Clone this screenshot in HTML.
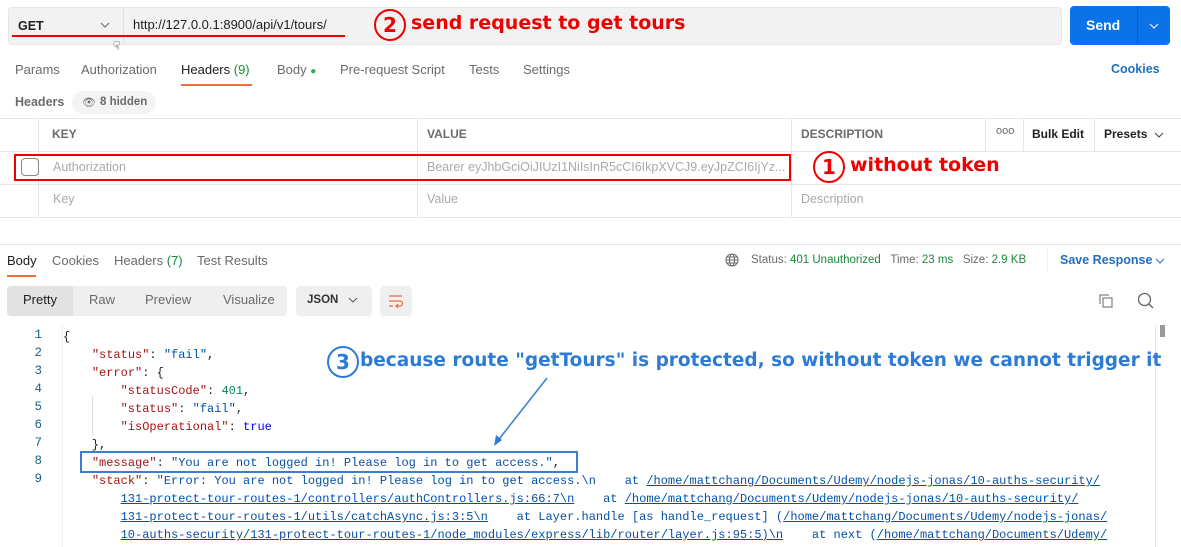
<!DOCTYPE html>
<html><head><meta charset="utf-8"><style>
*{margin:0;padding:0;box-sizing:border-box}
body{width:1181px;height:547px;overflow:hidden;background:#fff;font-family:"Liberation Sans",sans-serif;font-size:13px;color:#212121;position:relative}
.a{position:absolute;white-space:nowrap}
.g{color:#6b6b6b}
.mono{font-family:"Liberation Mono",monospace;font-size:12px}
.k{color:#a31515}.s{color:#0451a5}.n{color:#098658}.t{color:#0000ff}
.u{text-decoration:underline;color:#0451a5}
.ln{position:absolute;left:20px;width:22px;text-align:right;font-family:"Liberation Mono",monospace;font-size:12.5px;color:#1f5f8b}
.circ{position:absolute;border-radius:50%;font-weight:bold;text-align:center}
</style></head><body>
<!-- url bar -->
<div class="a" style="left:8px;top:7px;width:1054px;height:38px;background:#f2f2f2;border:1px solid #e6e6e6;border-radius:4px"></div>
<div class="a" style="left:123px;top:8px;width:1px;height:36px;background:#e0e0e0"></div>
<div class="a" style="left:18px;top:19px;font-weight:bold;font-size:12.5px">GET</div>
<svg class="a" style="left:100px;top:21px" width="10" height="8"><path d="M1 2l4 4 4-4" stroke="#666" fill="none"/></svg>
<div class="a" style="left:133px;top:17px;font-size:13px">http://127.0.0.1:8900/api/v1/tours/</div>
<div class="a" style="left:12px;top:35px;width:333px;height:2px;background:#e00"></div>
<div class="a" style="left:113px;top:39px;font-size:12px">☟</div>
<div class="circ" style="left:374px;top:9px;width:32px;height:32px;border:2px solid #e00;color:#e00;font-size:20px;line-height:28px;font-family:'DejaVu Sans',sans-serif">2</div>
<div class="a" style="left:411px;top:12px;color:#e00;font-weight:bold;font-size:19px;font-family:'DejaVu Sans',sans-serif">send request to get tours</div>
<div class="a" style="left:1070px;top:6px;width:100px;height:39px;background:#0b72e7;border-radius:4px"></div>
<div class="a" style="left:1137px;top:6px;width:1px;height:39px;background:#0a5fc2"></div>
<div class="a" style="left:1086px;top:17px;color:#fff;font-weight:bold;font-size:14px">Send</div>
<svg class="a" style="left:1149px;top:22px" width="10" height="8"><path d="M1 2l4 4 4-4" stroke="#fff" fill="none"/></svg>
<!-- tabs -->
<div class="a g" style="left:15px;top:62px">Params</div>
<div class="a g" style="left:81px;top:62px">Authorization</div>
<div class="a" style="left:181px;top:62px">Headers <span style="color:#1a8a3b">(9)</span></div>
<div class="a" style="left:181px;top:84px;width:71px;height:2px;background:#f26b3a"></div>
<div class="a g" style="left:277px;top:62px">Body <span style="color:#26b34a;font-size:10px">●</span></div>
<div class="a g" style="left:340px;top:62px">Pre-request Script</div>
<div class="a g" style="left:469px;top:62px">Tests</div>
<div class="a g" style="left:523px;top:62px">Settings</div>
<div class="a" style="left:1111px;top:62px;color:#1f6fc5;font-weight:bold;font-size:12.5px">Cookies</div>
<div class="a g" style="left:15px;top:95px;font-weight:bold;font-size:12.5px">Headers</div>
<div class="a" style="left:72px;top:91px;width:84px;height:23px;background:#f4f4f4;border-radius:12px"></div>
<div class="a g" style="left:82px;top:96px;font-size:11px">👁</div>
<div class="a g" style="left:100px;top:96px;font-size:11.5px;font-weight:bold">8 hidden</div>
<!-- table -->
<div class="a" style="left:0;top:118px;width:1181px;height:1px;background:#e6e6e6"></div>
<div class="a" style="left:0;top:151px;width:1181px;height:1px;background:#e6e6e6"></div>
<div class="a" style="left:0;top:184px;width:1181px;height:1px;background:#e6e6e6"></div>
<div class="a" style="left:0;top:217px;width:1181px;height:1px;background:#e6e6e6"></div>
<div class="a" style="left:38px;top:118px;width:1px;height:99px;background:#e6e6e6"></div>
<div class="a" style="left:417px;top:118px;width:1px;height:99px;background:#e6e6e6"></div>
<div class="a" style="left:791px;top:118px;width:1px;height:99px;background:#e6e6e6"></div>
<div class="a" style="left:985px;top:118px;width:1px;height:33px;background:#e6e6e6"></div>
<div class="a" style="left:1023px;top:118px;width:1px;height:33px;background:#e6e6e6"></div>
<div class="a" style="left:1094px;top:118px;width:1px;height:33px;background:#e6e6e6"></div>
<div class="a g" style="left:52px;top:127px;font-weight:bold;font-size:12px">KEY</div>
<div class="a g" style="left:427px;top:127px;font-weight:bold;font-size:12px">VALUE</div>
<div class="a g" style="left:801px;top:127px;font-weight:bold;font-size:12px">DESCRIPTION</div>
<div class="a g" style="left:996px;top:125px;font-size:11px">ooo</div>
<div class="a" style="left:1032px;top:127px;font-weight:bold;font-size:12px">Bulk Edit</div>
<div class="a" style="left:1104px;top:127px;font-weight:bold;font-size:12px">Presets</div>
<svg class="a" style="left:1154px;top:131px" width="10" height="8"><path d="M1 2l4 4 4-4" stroke="#444" fill="none"/></svg>
<div class="a" style="left:21px;top:158px;width:18px;height:18px;border:1px solid #888;border-radius:4px"></div>
<div class="a" style="left:53px;top:160px;color:#aaa;font-size:12.5px">Authorization</div>
<div class="a" style="left:427px;top:160px;color:#aaa;font-size:12.5px">Bearer eyJhbGciOiJIUzI1NiIsInR5cCI6IkpXVCJ9.eyJpZCI6IjYz...</div>
<div class="a" style="left:14px;top:154px;width:777px;height:27px;border:2px solid #e00"></div>
<div class="circ" style="left:813px;top:151px;width:32px;height:32px;border:2px solid #e00;color:#e00;font-size:20px;line-height:28px;font-family:'DejaVu Sans',sans-serif">1</div>
<div class="a" style="left:850px;top:154px;color:#e00;font-weight:bold;font-size:19px;font-family:'DejaVu Sans',sans-serif">without token</div>
<div class="a" style="left:53px;top:192px;color:#aaa;font-size:12.5px">Key</div>
<div class="a" style="left:427px;top:192px;color:#aaa;font-size:12.5px">Value</div>
<div class="a" style="left:801px;top:192px;color:#aaa;font-size:12.5px">Description</div>
<!-- response -->
<div class="a" style="left:0;top:244px;width:1181px;height:1px;background:#e6e6e6"></div>
<div class="a" style="left:7px;top:253px">Body</div>
<div class="a" style="left:7px;top:275px;width:29px;height:2px;background:#f26b3a"></div>
<div class="a g" style="left:52px;top:253px">Cookies</div>
<div class="a g" style="left:114px;top:253px">Headers <span style="color:#1a8a3b">(7)</span></div>
<div class="a g" style="left:197px;top:253px">Test Results</div>
<svg class="a" style="left:725px;top:253px" width="14" height="14"><circle cx="7" cy="7" r="6" fill="none" stroke="#666"/><ellipse cx="7" cy="7" rx="2.5" ry="6" fill="none" stroke="#666"/><path d="M1 7h12M2 4h10M2 10h10" stroke="#666"/></svg>
<div class="a g" style="left:751px;top:254px;font-size:11.5px">Status: <span style="color:#1a8a3b">401 Unauthorized</span>&nbsp;&nbsp;&nbsp;Time: <span style="color:#1a8a3b">23 ms</span>&nbsp;&nbsp;&nbsp;Size: <span style="color:#1a8a3b">2.9 KB</span></div>
<div class="a" style="left:1047px;top:248px;width:1px;height:24px;background:#eee"></div>
<div class="a" style="left:1060px;top:253px;color:#1f6fc5;font-weight:bold;font-size:12.5px">Save Response</div>
<svg class="a" style="left:1155px;top:257px" width="10" height="8"><path d="M1 2l4 4 4-4" stroke="#1f6fc5" fill="none"/></svg>
<div class="a" style="left:7px;top:286px;width:280px;height:30px;background:#efefef;border-radius:4px"></div>
<div class="a" style="left:7px;top:286px;width:66px;height:30px;background:#e2e2e2;border-radius:4px 0 0 4px"></div>
<div class="a" style="left:23px;top:292px">Pretty</div>
<div class="a g" style="left:89px;top:292px">Raw</div>
<div class="a g" style="left:145px;top:292px">Preview</div>
<div class="a g" style="left:223px;top:292px">Visualize</div>
<div class="a" style="left:296px;top:286px;width:76px;height:30px;background:#efefef;border-radius:4px"></div>
<div class="a" style="left:307px;top:294px;font-size:11.5px;font-weight:bold;color:#333">JSON</div>
<svg class="a" style="left:348px;top:296px" width="10" height="8"><path d="M1 2l4 4 4-4" stroke="#555" fill="none"/></svg>
<div class="a" style="left:380px;top:286px;width:32px;height:30px;background:#efefef;border-radius:4px"></div>
<svg class="a" style="left:388px;top:293px" width="16" height="16"><path d="M1 3h13M1 8h11a2.5 2.5 0 010 5H8M10 11l-2 2 2 2M1 13h4" stroke="#f26b3a" fill="none" stroke-width="1.2"/></svg>
<svg class="a" style="left:1098px;top:293px" width="16" height="16"><rect x="5" y="5" width="9" height="9" fill="none" stroke="#666"/><path d="M2 11V2h9" fill="none" stroke="#666"/></svg>
<svg class="a" style="left:1137px;top:292px" width="18" height="18"><circle cx="7.5" cy="7.5" r="6" fill="none" stroke="#666" stroke-width="1.3"/><path d="M12 12l4 4" stroke="#666" stroke-width="1.3"/></svg>
<div class="a" style="left:1160px;top:325px;width:5px;height:12px;background:#999"></div>
<div class="a" style="left:1155px;top:325px;width:1px;height:222px;background:#e6e6e6"></div>
<div class="a" style="left:62px;top:325px;width:1px;height:222px;background:#eee"></div>
<div class="a" style="left:92px;top:396px;width:1px;height:40px;background:#ddd"></div>
<div class="ln" style="top:328px">1</div><div class="ln" style="top:346px">2</div><div class="ln" style="top:364px">3</div><div class="ln" style="top:382px">4</div><div class="ln" style="top:400px">5</div><div class="ln" style="top:418px">6</div><div class="ln" style="top:436px">7</div><div class="ln" style="top:454px">8</div><div class="ln" style="top:472px">9</div>
<pre class="mono" style="position:absolute;white-space:pre;left:63px;top:328px;line-height:18px">{
    <span class="k">"status"</span>: <span class="s">"fail"</span>,
    <span class="k">"error"</span>: {
        <span class="k">"statusCode"</span>: <span class="n">401</span>,
        <span class="k">"status"</span>: <span class="s">"fail"</span>,
        <span class="k">"isOperational"</span>: <span class="t">true</span>
    },
    <span class="k">"message"</span>: <span class="s">"You are not logged in! Please log in to get access."</span>,
    <span class="k">"stack"</span>: <span class="s">"Error: You are not logged in! Please log in to get access.\n    at <span class="u">/home/mattchang/Documents/Udemy/nodejs-jonas/10-auths-security/</span>
        <span class="u">131-protect-tour-routes-1/controllers/authControllers.js:66:7\n</span>    at <span class="u">/home/mattchang/Documents/Udemy/nodejs-jonas/10-auths-security/</span>
        <span class="u">131-protect-tour-routes-1/utils/catchAsync.js:3:5\n</span>    at Layer.handle [as handle_request] (<span class="u">/home/mattchang/Documents/Udemy/nodejs-jonas/</span>
        <span class="u">10-auths-security/131-protect-tour-routes-1/node_modules/express/lib/router/layer.js:95:5)\n</span>    at next (<span class="u">/home/mattchang/Documents/Udemy/</span></span></pre>
<div class="a" style="left:80px;top:451px;width:498px;height:22px;border:2px solid #3a7fd0"></div>
<div class="circ" style="left:327px;top:346px;width:32px;height:32px;border:2px solid #2e7bd6;color:#2e7bd6;font-size:20px;line-height:28px;font-family:'DejaVu Sans',sans-serif">3</div>
<div class="a" style="left:360px;top:350px;color:#2e7bd6;font-weight:bold;font-size:18.5px;font-family:'DejaVu Sans',sans-serif">because route "getTours" is protected, so without token we cannot trigger it</div>
<svg class="a" style="left:488px;top:376px" width="64" height="74"><path d="M59 2L8 67" stroke="#2e7bd6" stroke-width="1.5"/><path d="M6 70l2-11 6 5z" fill="#2e7bd6"/></svg>
</body></html>
